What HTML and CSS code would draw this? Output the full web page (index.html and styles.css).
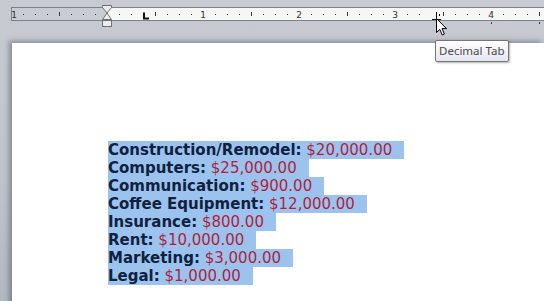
FILE: index.html
```html
<!DOCTYPE html>
<html lang="en">
<head>
    <meta charset="UTF-8">
    <title>Decimal Tab</title>
    <link rel="stylesheet" href="styles.css">
</head>
<body>
    <div class="workspace">
        <div class="ruler-bar">
            <svg class="ruler" width="533" height="24" viewBox="0 0 533 24">
                <rect x="0.5" y="3.5" width="540" height="13" fill="#f6f6f6" stroke="#7c838c"/>
                <rect x="1" y="4" width="95" height="12" fill="#c9cdd3"/>
                <g fill="#3d3d3d">
                    <rect x="12" y="10" width="1" height="1"/><rect x="24" y="10" width="1" height="1"/><rect x="36" y="10" width="1" height="1"/>
                    <rect x="48" y="8" width="1" height="4"/>
                    <rect x="60" y="10" width="1" height="1"/><rect x="72" y="10" width="1" height="1"/><rect x="84" y="10" width="1" height="1"/>
                    <rect x="108" y="10" width="1" height="1"/><rect x="120" y="10" width="1" height="1"/><rect x="132" y="10" width="1" height="1"/>
                    <rect x="144" y="8" width="1" height="4"/>
                    <rect x="156" y="10" width="1" height="1"/><rect x="168" y="10" width="1" height="1"/><rect x="180" y="10" width="1" height="1"/>
                    <rect x="204" y="10" width="1" height="1"/><rect x="216" y="10" width="1" height="1"/><rect x="228" y="10" width="1" height="1"/>
                    <rect x="240" y="8" width="1" height="4"/>
                    <rect x="252" y="10" width="1" height="1"/><rect x="264" y="10" width="1" height="1"/><rect x="276" y="10" width="1" height="1"/>
                    <rect x="300" y="10" width="1" height="1"/><rect x="312" y="10" width="1" height="1"/><rect x="324" y="10" width="1" height="1"/>
                    <rect x="336" y="8" width="1" height="4"/>
                    <rect x="348" y="10" width="1" height="1"/><rect x="360" y="10" width="1" height="1"/><rect x="372" y="10" width="1" height="1"/>
                    <rect x="396" y="10" width="1" height="1"/><rect x="408" y="10" width="1" height="1"/>
                    <rect x="432" y="8" width="1" height="4"/>
                    <rect x="444" y="10" width="1" height="1"/><rect x="456" y="10" width="1" height="1"/><rect x="468" y="10" width="1" height="1"/>
                    <rect x="492" y="10" width="1" height="1"/><rect x="504" y="10" width="1" height="1"/><rect x="516" y="10" width="1" height="1"/>
                    <rect x="528" y="8" width="1" height="4"/>
                    <rect x="480" y="18" width="1" height="2"/><rect x="528" y="18" width="1" height="2"/>
                </g>
                <g class="ruler-num" fill="#333" text-anchor="middle">
                    <text x="3" y="14">1</text>
                    <text x="192" y="14">1</text>
                    <text x="288" y="14">2</text>
                    <text x="384" y="14">3</text>
                    <text x="480" y="14">4</text>
                </g>
                <path d="M133 8.5 V14.5 H138" fill="none" stroke="#111" stroke-width="2"/>
                <g fill="#111">
                    <rect x="425" y="8" width="1" height="8"/>
                    <rect x="421" y="15" width="9" height="1"/>
                    <rect x="428" y="10" width="1" height="2"/>
                </g>
                <path d="M91.5 1.5 H100.5 V3.5 L96 9 L91.5 3.5 Z" fill="#ececec" stroke="#6c6f74"/>
                <path d="M96 9 L100.5 15.5 H91.5 Z" fill="#ececec" stroke="#6c6f74"/>
                <rect x="91.5" y="16.5" width="9" height="6" fill="#ececec" stroke="#6c6f74"/>
            </svg>
        </div>
        <div class="page">
            <div class="budget">
                <div class="row"><b class="label">Construction/Remodel:</b> <span class="amount">$20,000.00</span></div>
                <div class="row"><b class="label">Computers:</b> <span class="amount">$25,000.00</span></div>
                <div class="row"><b class="label">Communication:</b> <span class="amount">$900.00</span></div>
                <div class="row"><b class="label">Coffee Equipment:</b> <span class="amount">$12,000.00</span></div>
                <div class="row"><b class="label">Insurance:</b> <span class="amount">$800.00</span></div>
                <div class="row"><b class="label">Rent:</b> <span class="amount">$10,000.00</span></div>
                <div class="row"><b class="label">Marketing:</b> <span class="amount">$3,000.00</span></div>
                <div class="row"><b class="label">Legal:</b> <span class="amount">$1,000.00</span></div>
            </div>
        </div>
        <svg class="cursor" width="14" height="20" viewBox="0 0 14 20">
            <path d="M0.5 0.5 V14.5 L3.8 11.4 L6.3 17 L8.4 16 L6 10.6 H10.5 Z" fill="#fff" stroke="#000"/>
        </svg>
        <div class="tooltip">Decimal Tab</div>
    </div>
</body>
</html>
```

FILE: styles.css
```css
body {
    margin: 0;
    padding: 0;
    overflow: hidden;
}
.workspace {
    position: relative;
    width: 544px;
    height: 301px;
    overflow: hidden;
    background: linear-gradient(#c7cbd1, #bfc4cb 60%, #b3b8c0);
}
.ruler-bar {
    height: 39px;
    padding: 4px 0 0 11px;
}
.ruler {
    display: block;
}
.ruler-num {
    font-family: "DejaVu Sans", sans-serif;
    font-size: 9px;
}
.page {
    margin-left: 12px;
    height: 260px;
    background: #fff;
    box-shadow: -3px -2px 5px rgba(60, 66, 76, 0.45);
    padding: 98px 0 0 96px;
}
.budget {
    font-family: "DejaVu Sans", Verdana, sans-serif;
    font-size: 15px;
    line-height: 18px;
}
.row {
    width: fit-content;
    height: 18px;
    padding-right: 12px;
    background: #9cc3ed;
    white-space: nowrap;
}
.label {
    color: #10213f;
}
.amount {
    color: #ae1f3e;
}
.cursor {
    position: absolute;
    left: 436px;
    top: 18px;
}
.tooltip {
    position: absolute;
    left: 435px;
    top: 40px;
    height: 20px;
    padding: 0 3px;
    border: 1px solid #767676;
    border-radius: 2px;
    background: linear-gradient(#ffffff, #e4e5f0);
    box-shadow: 1px 1px 2px rgba(0, 0, 0, 0.3);
    font-family: "Noto Sans", sans-serif;
    font-size: 11.5px;
    line-height: 20px;
    color: #4c4c4c;
}
```
